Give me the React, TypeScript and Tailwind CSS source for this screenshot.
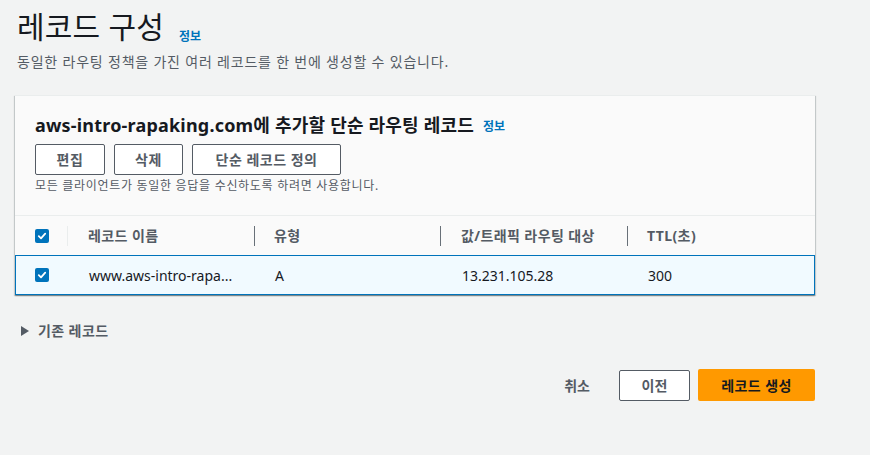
import React from "react";

const font = { fontFamily: '"Noto Sans", "Noto Sans CJK KR", sans-serif' };

function Check() {
  return (
    <span className="flex h-[14px] w-[14px] items-center justify-center rounded-[2px] bg-[#0073bb]">
      <svg width="10" height="10" viewBox="0 0 10 10" fill="none">
        <path d="M1.8 5.2 L4 7.3 L8.2 2.6" stroke="white" strokeWidth="1.8" strokeLinecap="round" strokeLinejoin="round" />
      </svg>
    </span>
  );
}

export default function App() {
  return (
    <div className="h-[455px] w-[870px] overflow-hidden bg-[#f2f3f3] text-[#16191f]" style={font}>
      <div className="pl-[17px] pt-[6px]">
        <div className="flex items-end gap-[15px]">
          <h1 className="text-[30px] leading-[42px] font-normal tracking-[0.2px] text-[#16191f]">레코드 구성</h1>
          <span className="mb-[2px] text-[12px] font-bold text-[#0073bb]">정보</span>
        </div>
        <p className="mt-[4px] text-[14px] leading-[20px] tracking-[0.8px] text-[#545b64]">
          동일한 라우팅 정책을 가진 여러 레코드를 한 번에 생성할 수 있습니다.
        </p>
      </div>

      <div className="ml-[15px] mt-[23px] w-[800px] border-t border-[#eaeded] bg-[#fafafa] shadow-[0_1px_1px_0_rgba(0,28,36,0.3),1px_1px_1px_0_rgba(0,28,36,0.15),-1px_1px_1px_0_rgba(0,28,36,0.15)]">
        <div className="px-[20px] pt-[17px] pb-[21px]">
          <div className="flex items-end gap-[9px]">
            <h2 className="text-[18px] leading-[24px] font-bold tracking-[0.2px] text-[#16191f]">
              aws-intro-rapaking.com에 추가할 단순 라우팅 레코드
            </h2>
            <span className="mb-[1px] text-[12px] font-bold text-[#0073bb]">정보</span>
          </div>
          <div className="mt-[7px] flex gap-[9px]">
            <button className="h-[31px] w-[70px] rounded-[2px] border border-[#545b64] bg-white text-[14px] font-bold tracking-[0.5px] text-[#545b64]">편집</button>
            <button className="h-[31px] w-[69px] rounded-[2px] border border-[#545b64] bg-white text-[14px] font-bold tracking-[0.5px] text-[#545b64]">삭제</button>
            <button className="h-[31px] w-[149px] rounded-[2px] border border-[#545b64] bg-white text-[14px] font-bold tracking-[0.5px] text-[#545b64]">단순 레코드 정의</button>
          </div>
          <p className="mt-[3px] text-[12px] leading-[16px] tracking-[0.7px] text-[#545b64]">
            모든 클라이언트가 동일한 응답을 수신하도록 하려면 사용합니다.
          </p>
        </div>
        <div className="border-t border-[#eaeded]">
          <div className="flex h-[39px] items-center text-[14px] font-bold tracking-[0.4px] text-[#545b64]">
            <div className="flex w-[52px] pl-[20px]"><Check /></div>
            <div className="h-[20px] w-px bg-[#eaeded]" />
            <div className="w-[186px] pl-[20px]">레코드 이름</div>
            <div className="h-[20px] w-px bg-[#687078]" />
            <div className="w-[185px] pl-[19px]">유형</div>
            <div className="h-[20px] w-px bg-[#687078]" />
            <div className="w-[186px] pl-[20px]">값/트래픽 라우팅 대상</div>
            <div className="h-[20px] w-px bg-[#687078]" />
            <div className="pl-[19px]">TTL(초)</div>
          </div>
          <div className="flex h-[40px] items-center border border-[#0073bb] bg-[#f1faff] text-[14px] text-[#16191f]">
            <div className="flex w-[52px] pl-[19px]"><Check /></div>
            <div className="w-[187px] pl-[21px] truncate">www.aws-intro-rapa...</div>
            <div className="w-[186px] pl-[20px]">A</div>
            <div className="w-[187px] pl-[21px]">13.231.105.28</div>
            <div className="pl-[20px]">300</div>
          </div>
        </div>
      </div>

      <div className="mt-[25px] flex items-center pl-[21px] text-[14px] font-bold tracking-[0.4px] text-[#545b64]">
        <svg width="8" height="10" viewBox="0 0 8 10"><path d="M0 0 L8 5 L0 10 Z" fill="#545b64" /></svg>
        <span className="ml-[9px]">기존 레코드</span>
      </div>

      <div className="mt-[28px] flex w-[815px] items-center justify-end">
        <span className="mr-[29px] text-[14px] font-bold text-[#545b64]">취소</span>
        <button className="mr-[8px] h-[31px] w-[71px] rounded-[2px] border border-[#545b64] bg-white text-[14px] font-bold text-[#545b64]">이전</button>
        <button className="h-[32px] w-[117px] rounded-[2px] bg-[#ff9900] text-[14px] font-bold tracking-[0.4px] text-[#16191f]">레코드 생성</button>
      </div>
    </div>
  );
}
